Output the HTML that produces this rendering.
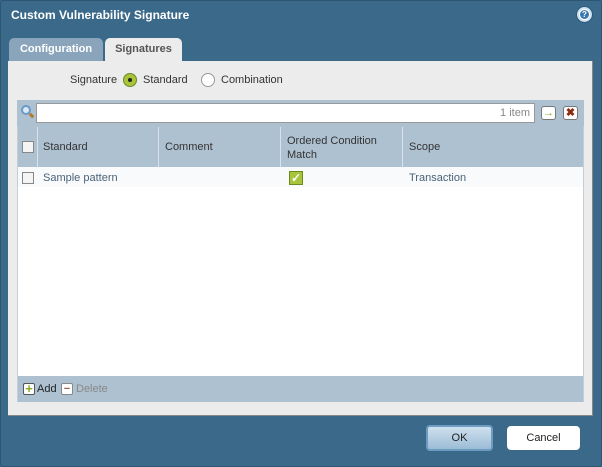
<!DOCTYPE html>
<html><head><style>
*{margin:0;padding:0;box-sizing:border-box}
body{width:602px;height:467px;background:#3a6989;font-family:"Liberation Sans",sans-serif;font-size:11px;color:#333;position:relative;overflow:hidden}
.a{position:absolute}
</style></head><body>
<div class="a" style="left:0;top:0;width:602px;height:467px;border:1px solid #2d5673;border-radius:3px"></div>
<div class="a" style="left:11px;top:8px;color:#fff;font-weight:bold;font-size:12px">Custom Vulnerability Signature</div>
<div class="a" style="left:577px;top:7px;width:15px;height:15px;border-radius:50%;background:#fff;border:2px solid #cfe0ee;box-shadow:0 0 0 1px #2a5a80"><div style="position:absolute;left:1px;top:1px;width:9px;height:9px;border-radius:50%;background:#3a78b0;color:#fff;font-size:8px;font-weight:bold;text-align:center;line-height:9px">?</div></div>
<div class="a" style="left:9px;top:38px;width:94px;height:23px;background:#8aa5bb;border-radius:5px 5px 0 0;color:#fff;font-weight:bold;font-size:11px;text-align:center;line-height:22px">Configuration</div>
<div class="a" style="left:105px;top:38px;width:77px;height:24px;background:#ececec;border-radius:5px 5px 0 0;color:#555;font-weight:bold;font-size:11px;text-align:center;line-height:22px">Signatures</div>
<div class="a" style="left:8px;top:61px;width:585px;height:355px;background:#ececec;border-right:1px solid #888;border-bottom:1px solid #888"></div>
<div class="a" style="left:70px;top:74px;font-size:11px">Signature</div>
<div class="a" style="left:123px;top:73px;width:14px;height:14px;border-radius:50%;background:#a7c43a;border:1px solid #6c8a20"><div style="position:absolute;left:4px;top:4px;width:4px;height:4px;border-radius:50%;background:#222"></div></div>
<div class="a" style="left:143px;top:74px">Standard</div>
<div class="a" style="left:201px;top:73px;width:14px;height:14px;border-radius:50%;background:#fff;border:1px solid #999"></div>
<div class="a" style="left:221px;top:74px">Combination</div>
<div class="a" style="left:17px;top:100px;width:567px;height:302px;background:#fff;border:1px solid #c5ced6"></div>
<div class="a" style="left:17px;top:100px;width:567px;height:26px;background:#aec1d0"></div>
<div class="a" style="left:21px;top:105px;width:10px;height:10px;border-radius:50%;border:2px solid #6a9ac8;background:#dbe9f6"></div>
<div class="a" style="left:29px;top:114px;width:5px;height:3px;background:#b07a30;transform:rotate(45deg)"></div>
<div class="a" style="left:36px;top:103px;width:499px;height:20px;background:#fff;border:1px solid #999;text-align:right;padding-right:4px;line-height:19px;color:#888">1 item</div>
<div class="a" style="left:541px;top:106px;width:15px;height:14px;border:1px solid #777;border-radius:3px;background:#fff;color:#8aa82a;font-weight:bold;font-size:11px;text-align:center;line-height:12px">→</div>
<div class="a" style="left:563px;top:106px;width:15px;height:14px;border:1px solid #777;border-radius:3px;background:#fff;color:#8b2a10;font-weight:bold;font-size:11px;text-align:center;line-height:12px">✖</div>
<div class="a" style="left:18px;top:126px;width:565px;height:41px;background:#aec1d0"></div>
<div class="a" style="left:37px;top:127px;width:1px;height:40px;background:#d8e2ea"></div>
<div class="a" style="left:158px;top:127px;width:1px;height:40px;background:#d8e2ea"></div>
<div class="a" style="left:280px;top:127px;width:1px;height:40px;background:#d8e2ea"></div>
<div class="a" style="left:402px;top:127px;width:1px;height:40px;background:#d8e2ea"></div>
<div class="a" style="left:22px;top:141px;width:12px;height:12px;border:1px solid #888;background:#f4f4f4"></div>
<div class="a" style="left:43px;top:141px">Standard</div>
<div class="a" style="left:165px;top:141px">Comment</div>
<div class="a" style="left:287px;top:134px;line-height:14px">Ordered Condition<br>Match</div>
<div class="a" style="left:409px;top:141px">Scope</div>
<div class="a" style="left:18px;top:167px;width:565px;height:20px;background:#f8fafb"></div>
<div class="a" style="left:22px;top:172px;width:12px;height:12px;border:1px solid #888;background:#f4f4f4"></div>
<div class="a" style="left:43px;top:172px;color:#4a6278">Sample pattern</div>
<div class="a" style="left:289px;top:171px;width:14px;height:14px;background:#a7c43a;border:1px solid #6c8a20;color:#fff;font-weight:bold;font-size:12px;line-height:12px;text-align:center">✓</div>
<div class="a" style="left:409px;top:172px;color:#4a6278">Transaction</div>
<div class="a" style="left:18px;top:376px;width:565px;height:26px;background:#aec1d0"></div>
<div class="a" style="left:23px;top:383px;width:12px;height:12px;border:1px solid #555;border-radius:2px;background:#fff;color:#8aa82a;font-weight:bold;font-size:13px;line-height:10px;text-align:center">+</div>
<div class="a" style="left:37px;top:383px;color:#222">Add</div>
<div class="a" style="left:61px;top:383px;width:12px;height:12px;border:1px solid #888;border-radius:2px;background:#fff;color:#a06050;font-weight:bold;font-size:11px;line-height:10px;text-align:center">−</div>
<div class="a" style="left:76px;top:383px;color:#888">Delete</div>
<div class="a" style="left:426px;top:425px;width:67px;height:26px;border:2px solid #6d9cc0;border-radius:4px;background:linear-gradient(#cfe0ee,#9bbcd6);text-align:center;line-height:22px;color:#222">OK</div>
<div class="a" style="left:507px;top:426px;width:73px;height:24px;border-radius:4px;background:#fff;text-align:center;line-height:24px;color:#222">Cancel</div>
</body></html>
